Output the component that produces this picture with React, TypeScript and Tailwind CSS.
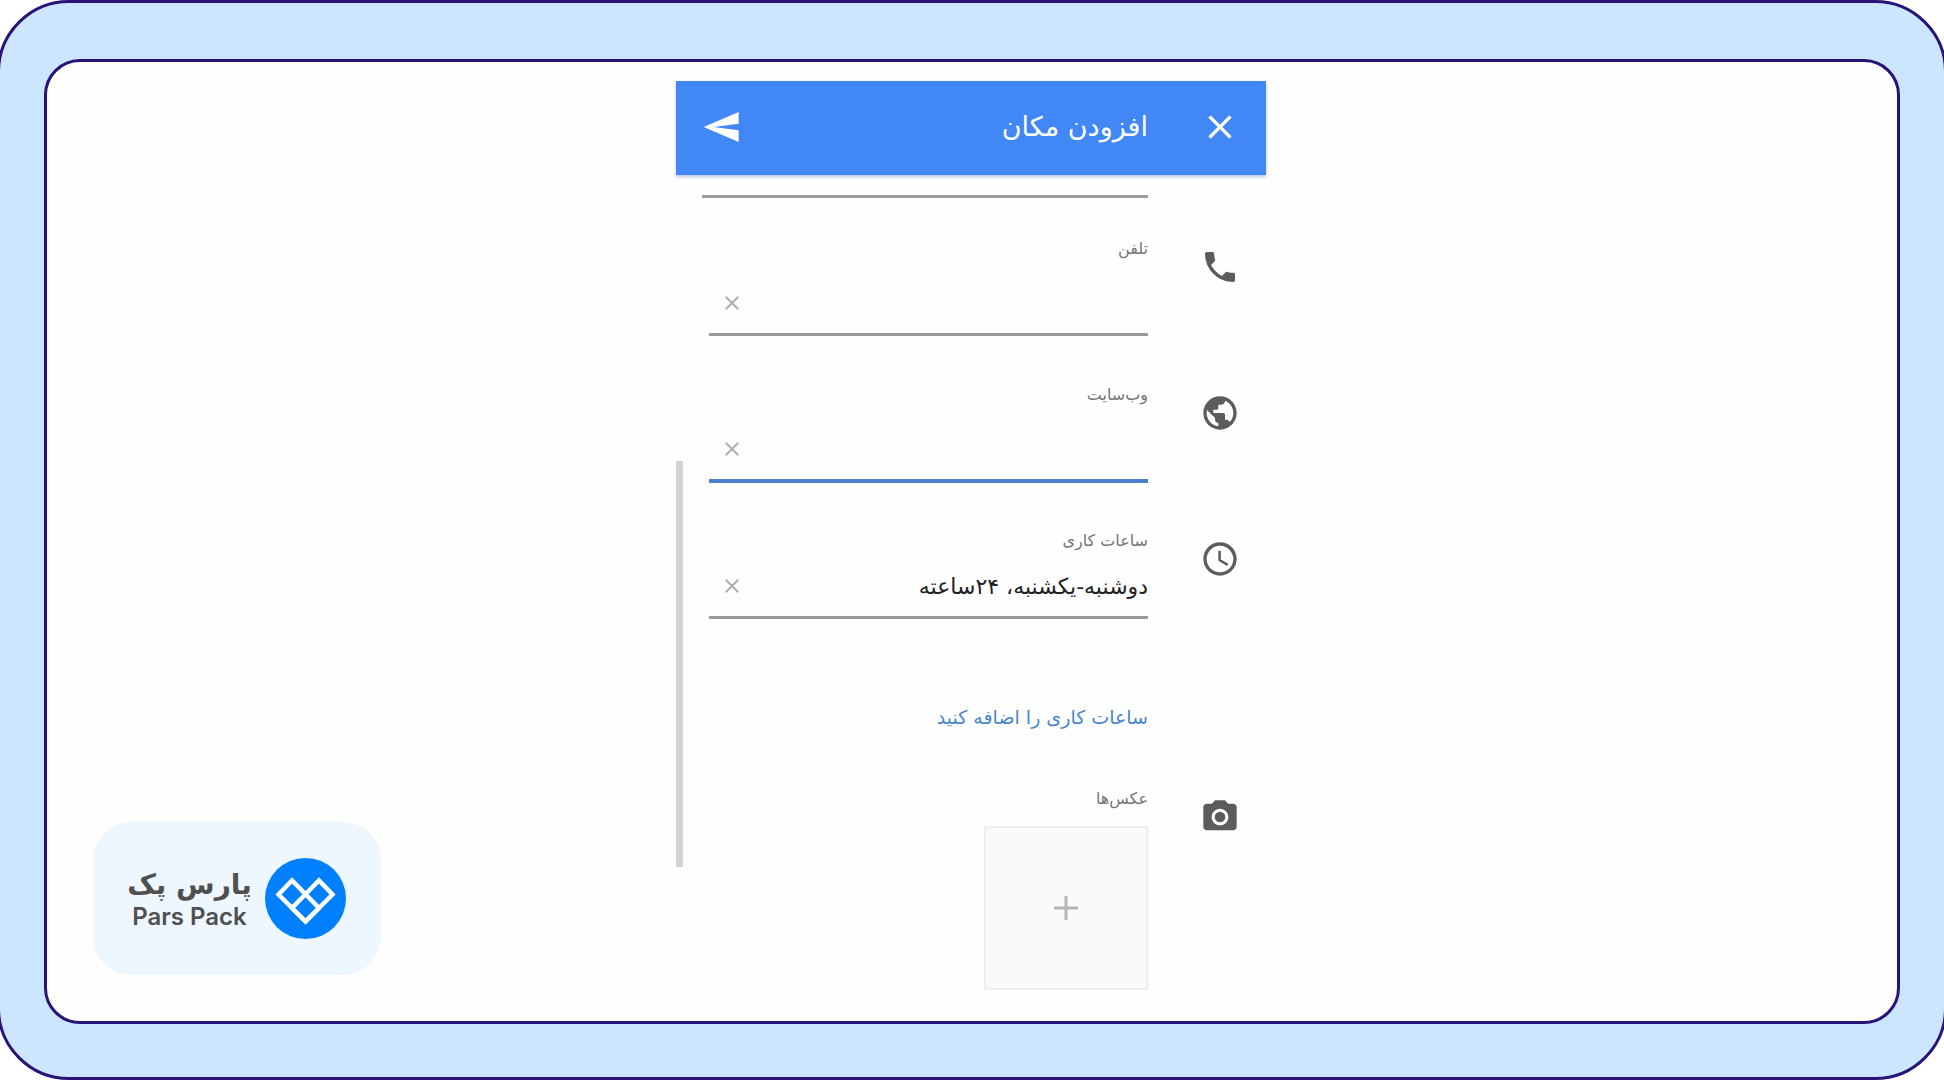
import type { ReactNode } from "react";
import {
  MdAccessTime,
  MdCameraAlt,
  MdClose,
  MdPhone,
  MdPublic,
  MdSend,
} from "react-icons/md";

type FieldProps = {
  id: string;
  label: string;
  icon: ReactNode;
  value?: string;
  rowClass: string;
  lineClass: string;
};

function Field({ id, label, icon, value = "", rowClass, lineClass }: FieldProps) {
  return (
    <div className={`flex items-start gap-[52px] ${rowClass}`}>
      <div className="mt-[10px] shrink-0 text-[#5c5c5c]">{icon}</div>

      <div className="min-w-0 flex-1">
        <label htmlFor={id} className="block h-6 text-base leading-6 text-[#757575]">
          {label}
        </label>
        <div className={`flex items-center pb-3 pl-[11px] ${lineClass}`}>
          <input
            id={id}
            type="text"
            defaultValue={value}
            className="h-9 min-w-0 flex-1 bg-transparent text-[22px] text-[#222222] outline-none"
          />
          <button type="button" aria-label="پاک کردن" className="text-[#b0b0b0]">
            <MdClose size={24} />
          </button>
        </div>
      </div>
    </div>
  );
}

function Logo() {
  return (
    <div className="mb-[46px] ml-[46px] flex h-[153px] w-[288px] items-center justify-center gap-[14px] self-end rounded-[38px] bg-[#eef7ff] text-[#505050]">
      <div className="flex w-[122px] flex-col items-center">
        <span dir="rtl" className="text-[28px] leading-9 font-bold whitespace-nowrap">
          پارس پک
        </span>
        <span className="font-['Inter',sans-serif] text-2xl leading-7 font-semibold whitespace-nowrap">
          Pars Pack
        </span>
      </div>
      <svg viewBox="0 0 81 81" className="size-[81px] shrink-0" aria-hidden="true">
        <circle cx="40.5" cy="40.5" r="40.5" fill="#0080ff" />
        <g fill="none" stroke="#fff" strokeWidth="4.4">
          <path d="M40.5 63.5 13.5 36.5 27 22.5 54 50Z" />
          <path d="M40.5 63.5 67.5 36.5 54 22.5 27 50Z" />
        </g>
      </svg>
    </div>
  );
}

export default function App() {
  return (
    <div className="flex min-h-screen overflow-x-hidden bg-white font-['DejaVu_Sans',sans-serif]">
      <div className="-mx-[3px] flex flex-1 rounded-[72px] border-3 border-[#271479] bg-[#cce6ff] px-11 pt-14 pb-[53px]">
        <div className="grid flex-1 grid-cols-[1fr_590px_1fr] rounded-[36px] border-3 border-[#271479] bg-[#fefefe] pr-[2px]">
          <Logo />

          <main dir="rtl" className="pt-[19px]">
            <header className="flex h-[94px] items-center bg-[#4187f6] px-[26px] pb-[2px] text-white shadow-[0_2px_3px_#b9c6e6]">
              <button type="button" aria-label="بستن">
                <MdClose size={40} />
              </button>
              <h1 className="mr-[52px] flex-1 text-[27px] leading-10">افزودن مکان</h1>
              <button type="button" aria-label="ارسال">
                <MdSend size={40} className="-scale-x-100" />
              </button>
            </header>

            <div className="flex">
              <form className="flex-1 pr-[26px] pl-[26px]">
                <div className="-ml-[7px] mt-5 mr-[92px] mb-[39px] h-[3px] bg-[#9b9b9b]" />

                <Field
                  id="phone"
                  label="تلفن"
                  icon={<MdPhone size={40} />}
                  rowClass="mb-[47px]"
                  lineClass="mt-6 border-b-3 border-[#9b9b9b]"
                />
                <Field
                  id="website"
                  label="وب‌سایت"
                  icon={<MdPublic size={40} />}
                  rowClass="mb-[46px]"
                  lineClass="mt-6 border-b-4 border-[#4a7fcb]"
                />
                <Field
                  id="hours"
                  label="ساعات کاری"
                  icon={<MdAccessTime size={40} />}
                  value="دوشنبه-یکشنبه، ۲۴ساعته"
                  rowClass=""
                  lineClass="mt-[15px] border-b-3 border-[#9b9b9b]"
                />

                <button
                  type="button"
                  className="mt-[82px] mr-[92px] mb-[54px] block h-8 text-[19px] leading-8 text-[#4a86cb]"
                >
                  ساعات کاری را اضافه کنید
                </button>

                <div className="flex items-start gap-[52px]">
                  <MdCameraAlt size={40} className="mt-[10px] text-[#5c5c5c]" />
                  <div>
                    <p className="h-6 text-base leading-6 text-[#757575]">عکس‌ها</p>
                    <button
                      type="button"
                      aria-label="افزودن عکس"
                      className="mt-[15px] flex size-[164px] items-center justify-center border-2 border-[#efefef] bg-[#fafafa]"
                    >
                      <svg viewBox="0 0 24 24" className="size-6" aria-hidden="true">
                        <path d="M12 0V24M0 12H24" stroke="#b5b5b5" strokeWidth="3" />
                      </svg>
                    </button>
                  </div>
                </div>
              </form>

              {/* scroll thumb */}
              <div className="mt-[286px] h-[406px] w-[7px] bg-[#d2d2d2]" />
            </div>
          </main>
        </div>
      </div>
    </div>
  );
}
